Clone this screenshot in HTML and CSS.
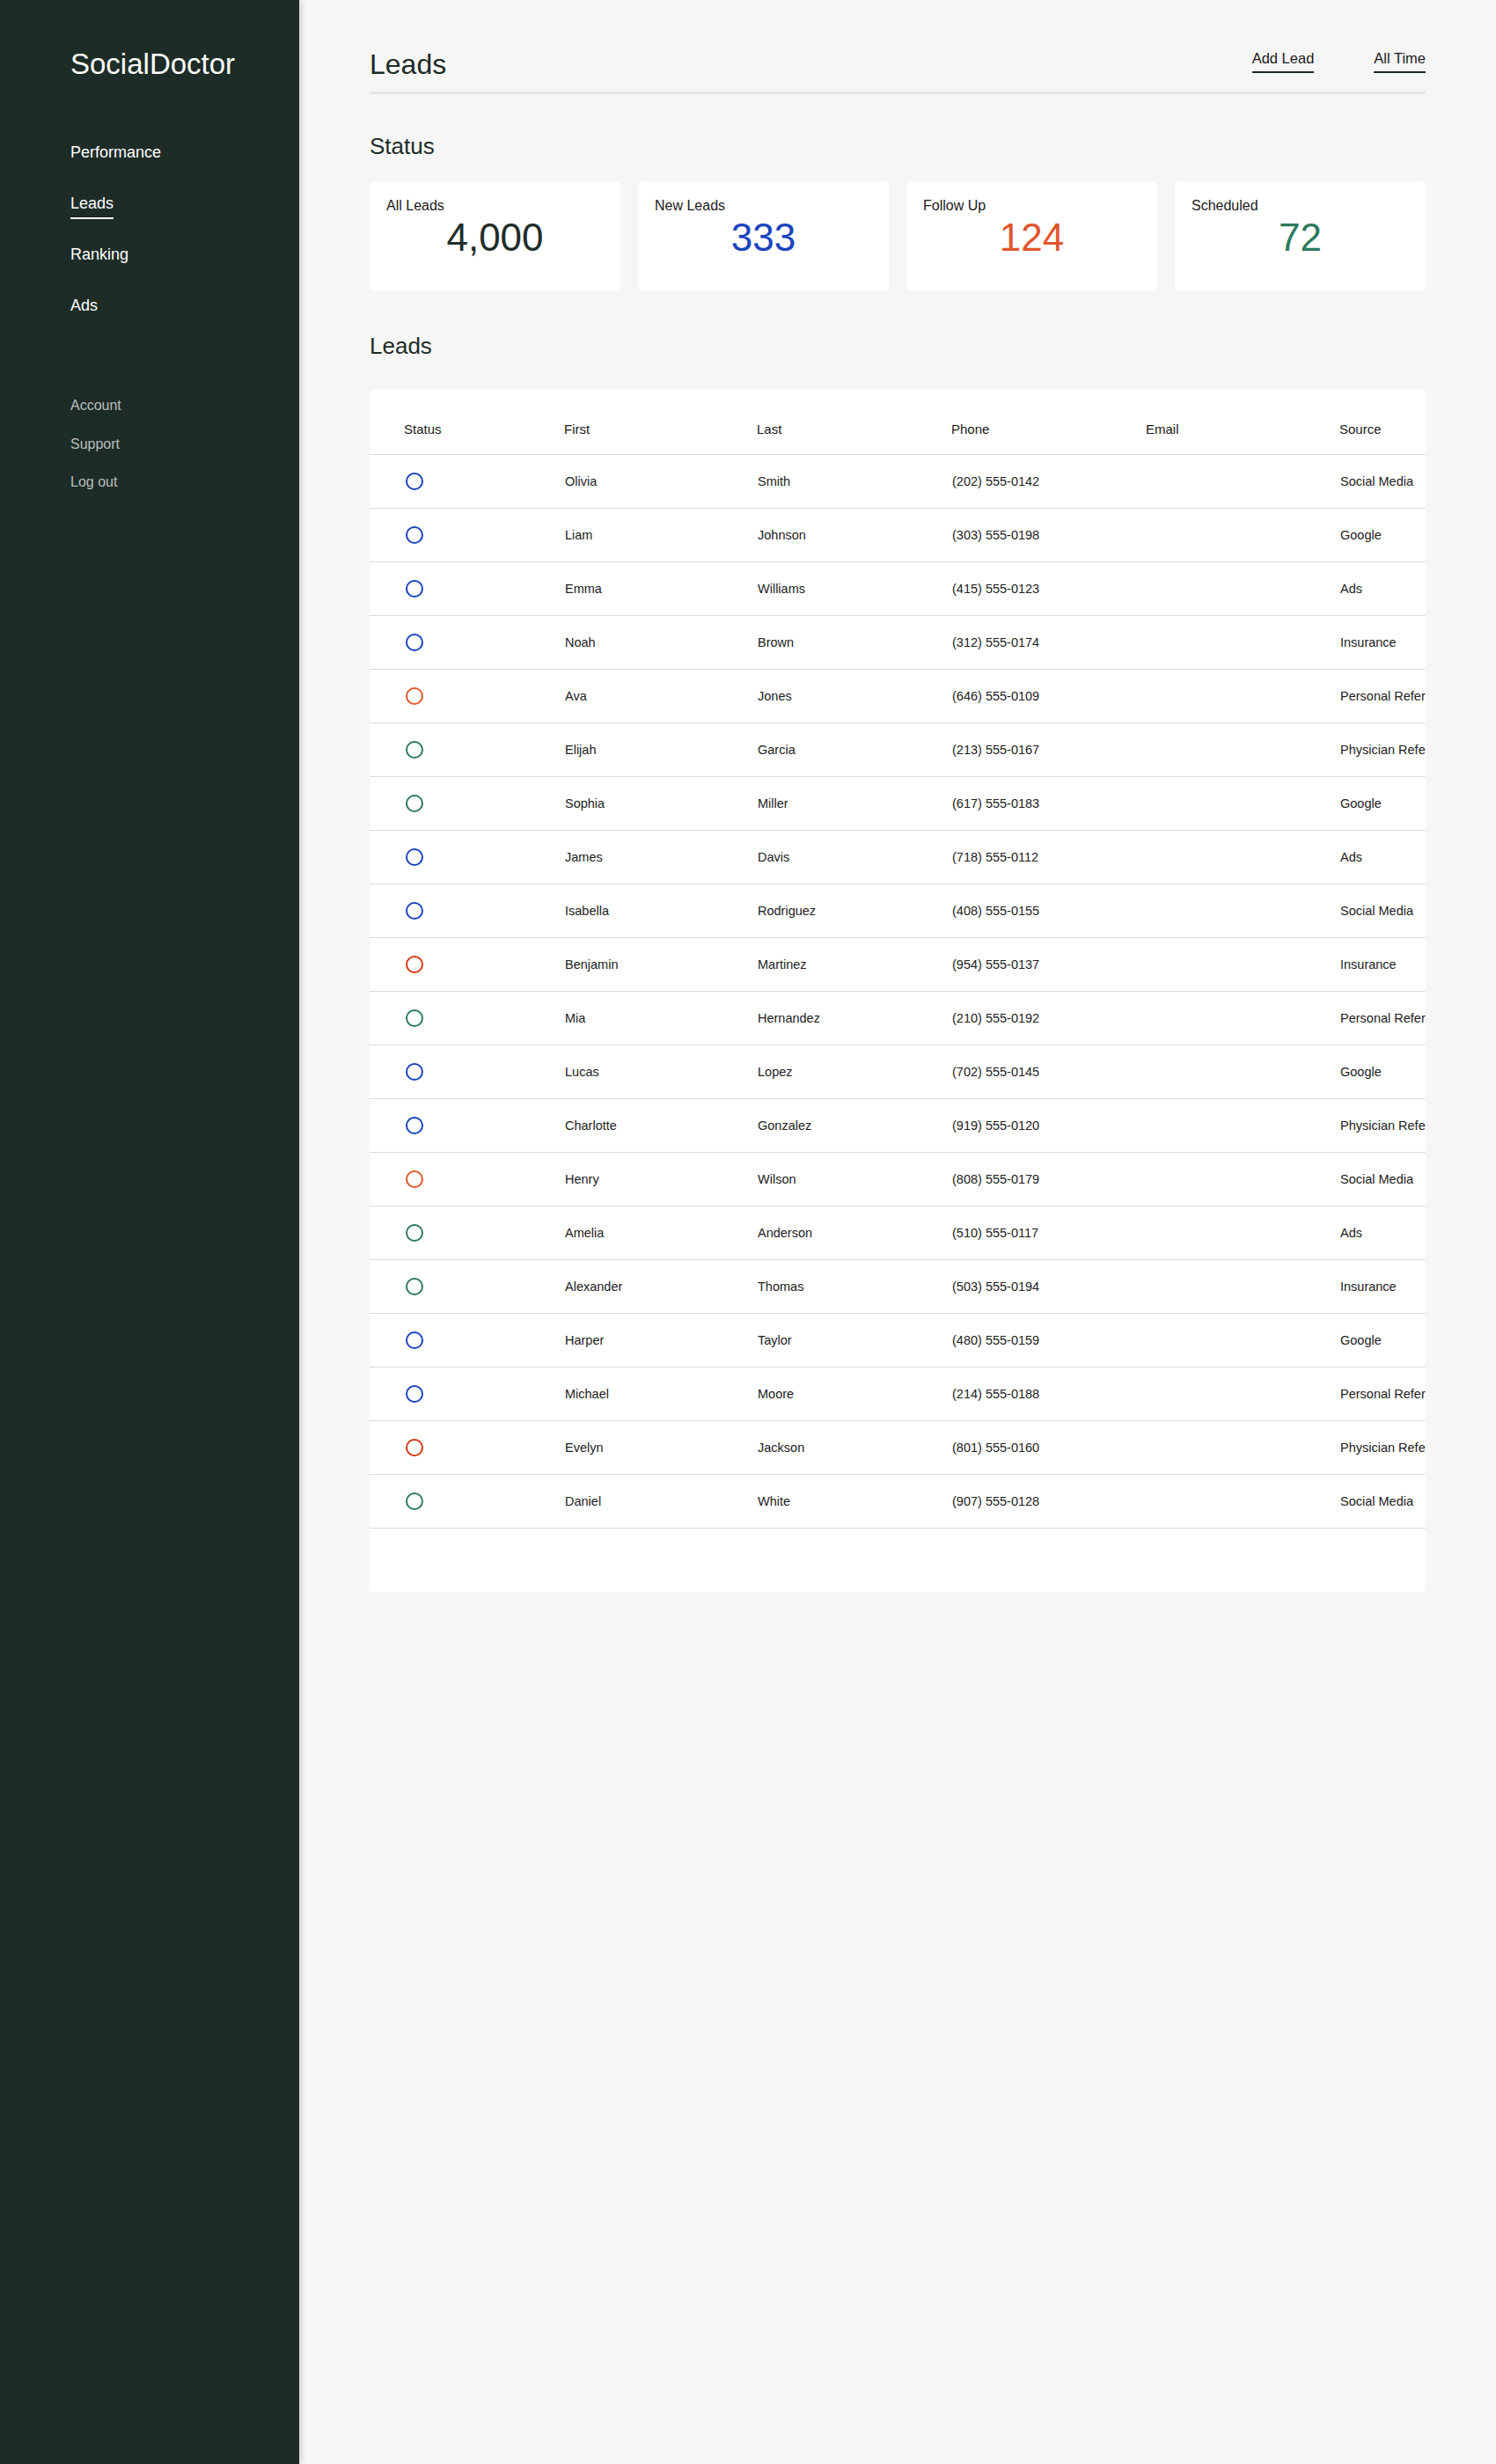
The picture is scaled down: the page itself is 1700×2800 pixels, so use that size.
FILE: index.html
```html
<!DOCTYPE html>
<html lang="en">
<head>
    <meta charset="UTF-8">
    <meta name="viewport" content="width=device-width, initial-scale=1.0">
    <title>Leads - SocialDoctor</title>
    <link rel="stylesheet" href="styles.css">
</head>
<body>
    <div class="layout">
        <!-- Sidebar -->
        <aside class="sidebar">
            <div class="logo">SocialDoctor</div>

            <nav class="nav-main">
                <a class="nav-link" href="#">Performance</a>
                <a class="nav-link active" href="#">Leads</a>
                <a class="nav-link" href="#">Ranking</a>
                <a class="nav-link" href="#">Ads</a>
            </nav>

            <nav class="nav-secondary">
                <a href="#">Account</a>
                <a href="#">Support</a>
                <a href="#">Log out</a>
            </nav>
        </aside>

        <main class="content">
            <header class="page-header">
                <h1>Leads</h1>
                <div class="header-links">
                    <a class="header-link" href="#">Add Lead</a>
                    <a class="header-link" href="#">All Time</a>
                </div>
            </header>

            <!-- Status cards -->
            <h2 class="section-title">Status</h2>
            <div class="stats">
                <div class="stat-card">
                    <div class="stat-label">All Leads</div>
                    <div class="stat-value">4,000</div>
                </div>
                <div class="stat-card">
                    <div class="stat-label">New Leads</div>
                    <div class="stat-value new">333</div>
                </div>
                <div class="stat-card">
                    <div class="stat-label">Follow Up</div>
                    <div class="stat-value follow">124</div>
                </div>
                <div class="stat-card">
                    <div class="stat-label">Scheduled</div>
                    <div class="stat-value scheduled">72</div>
                </div>
            </div>

            <!-- Leads table -->
            <h2 class="section-title leads-title">Leads</h2>
            <div class="table-card">
                <table class="leads-table">
                    <colgroup>
                        <col class="col-status">
                        <col class="col-first">
                        <col class="col-last">
                        <col class="col-phone">
                        <col class="col-email">
                        <col class="col-source">
                    </colgroup>
                    <thead>
                        <tr>
                            <th>Status</th>
                            <th>First</th>
                            <th>Last</th>
                            <th>Phone</th>
                            <th>Email</th>
                            <th>Source</th>
                        </tr>
                    </thead>
                    <tbody>
                        <tr><td><span class="dot new"></span></td><td>Olivia</td><td>Smith</td><td>(202) 555-0142</td><td></td><td>Social Media</td></tr>
                        <tr><td><span class="dot new"></span></td><td>Liam</td><td>Johnson</td><td>(303) 555-0198</td><td></td><td>Google</td></tr>
                        <tr><td><span class="dot new"></span></td><td>Emma</td><td>Williams</td><td>(415) 555-0123</td><td></td><td>Ads</td></tr>
                        <tr><td><span class="dot new"></span></td><td>Noah</td><td>Brown</td><td>(312) 555-0174</td><td></td><td>Insurance</td></tr>
                        <tr><td><span class="dot follow"></span></td><td>Ava</td><td>Jones</td><td>(646) 555-0109</td><td></td><td>Personal Referral</td></tr>
                        <tr><td><span class="dot scheduled"></span></td><td>Elijah</td><td>Garcia</td><td>(213) 555-0167</td><td></td><td>Physician Referral</td></tr>
                        <tr><td><span class="dot scheduled"></span></td><td>Sophia</td><td>Miller</td><td>(617) 555-0183</td><td></td><td>Google</td></tr>
                        <tr><td><span class="dot new"></span></td><td>James</td><td>Davis</td><td>(718) 555-0112</td><td></td><td>Ads</td></tr>
                        <tr><td><span class="dot new"></span></td><td>Isabella</td><td>Rodriguez</td><td>(408) 555-0155</td><td></td><td>Social Media</td></tr>
                        <tr><td><span class="dot urgent"></span></td><td>Benjamin</td><td>Martinez</td><td>(954) 555-0137</td><td></td><td>Insurance</td></tr>
                        <tr><td><span class="dot scheduled"></span></td><td>Mia</td><td>Hernandez</td><td>(210) 555-0192</td><td></td><td>Personal Referral</td></tr>
                        <tr><td><span class="dot new"></span></td><td>Lucas</td><td>Lopez</td><td>(702) 555-0145</td><td></td><td>Google</td></tr>
                        <tr><td><span class="dot new"></span></td><td>Charlotte</td><td>Gonzalez</td><td>(919) 555-0120</td><td></td><td>Physician Referral</td></tr>
                        <tr><td><span class="dot follow"></span></td><td>Henry</td><td>Wilson</td><td>(808) 555-0179</td><td></td><td>Social Media</td></tr>
                        <tr><td><span class="dot scheduled"></span></td><td>Amelia</td><td>Anderson</td><td>(510) 555-0117</td><td></td><td>Ads</td></tr>
                        <tr><td><span class="dot scheduled"></span></td><td>Alexander</td><td>Thomas</td><td>(503) 555-0194</td><td></td><td>Insurance</td></tr>
                        <tr><td><span class="dot new"></span></td><td>Harper</td><td>Taylor</td><td>(480) 555-0159</td><td></td><td>Google</td></tr>
                        <tr><td><span class="dot new"></span></td><td>Michael</td><td>Moore</td><td>(214) 555-0188</td><td></td><td>Personal Referral</td></tr>
                        <tr><td><span class="dot urgent"></span></td><td>Evelyn</td><td>Jackson</td><td>(801) 555-0160</td><td></td><td>Physician Referral</td></tr>
                        <tr><td><span class="dot scheduled"></span></td><td>Daniel</td><td>White</td><td>(907) 555-0128</td><td></td><td>Social Media</td></tr>
                    </tbody>
                </table>
            </div>
        </main>
    </div>
</body>
</html>
```

FILE: styles.css
```css
/* Base */
body {
    margin: 0;
    font-family: "Liberation Sans", Arial, sans-serif;
    background-color: #f6f6f6;
    color: #1d2b26;
}

a {
    color: inherit;
    text-decoration: none;
}

.layout {
    display: flex;
    min-height: 100vh;
}

/* Sidebar */
.sidebar {
    width: 340px;
    flex-shrink: 0;
    box-sizing: border-box;
    padding: 53px 0 0 80px;
    background-color: #1d2c27;
    color: #fff;
    box-shadow: 2px 0 6px rgba(0, 0, 0, 0.18);
}

.logo {
    font-size: 33px;
    line-height: 40px;
}

.nav-main {
    display: flex;
    flex-direction: column;
    align-items: flex-start;
    gap: 29px;
    margin-top: 69px;
}

.nav-link {
    font-size: 18px;
    line-height: 22px;
    padding-bottom: 5px;
    border-bottom: 2px solid transparent;
}

.nav-link.active {
    border-bottom-color: #fff;
}

.nav-secondary {
    display: flex;
    flex-direction: column;
    align-items: flex-start;
    gap: 23.5px;
    margin-top: 86px;
    color: #b9bfbc;
    font-size: 16px;
    line-height: 20px;
}

/* Main content */
.content {
    flex: 1;
    min-width: 0;
    padding: 54px 80px 80px;
}

.page-header {
    display: flex;
    justify-content: space-between;
    align-items: flex-end;
    padding-bottom: 12px;
    border-bottom: 3px solid #e6e6e6;
}

.page-header h1 {
    margin: 0;
    font-size: 32px;
    line-height: 38px;
    font-weight: 400;
}

.header-links {
    display: flex;
    gap: 68px;
    margin-bottom: 9px;
}

.header-link {
    font-size: 16.5px;
    line-height: 20px;
    padding-bottom: 5px;
    border-bottom: 2px solid #1d2c27;
    color: #1a1a1a;
}

.section-title {
    margin: 43px 0 25px;
    font-size: 26px;
    line-height: 32px;
    font-weight: 400;
}

.section-title.leads-title {
    margin: 47px 0 34px;
}

/* Status cards */
.stats {
    display: grid;
    grid-template-columns: repeat(4, 1fr);
    gap: 20px;
}

.stat-card {
    height: 123px;
    box-sizing: border-box;
    padding: 17px 19px 0;
    background-color: #fff;
    border-radius: 4px;
}

.stat-label {
    font-size: 16px;
    line-height: 20px;
    color: #1a1a1a;
}

.stat-value {
    margin-top: 1px;
    font-size: 44px;
    line-height: 50px;
    text-align: center;
    color: #1f2d28;
}

.stat-value.new { color: #1a44bd; }
.stat-value.follow { color: #e0552d; }
.stat-value.scheduled { color: #2b7a5e; }

/* Leads table */
.table-card {
    background-color: #fff;
    border-radius: 4px;
    overflow: hidden;
    padding-bottom: 72px;
}

.leads-table {
    width: 1322px;
    table-layout: fixed;
    border-collapse: collapse;
    color: #222;
}

.col-status { width: 221px; }
.col-first { width: 219px; }
.col-last { width: 221px; }
.col-phone { width: 221px; }
.col-email { width: 220px; }
.col-source { width: 220px; }

.leads-table th {
    padding: 36px 0 19px;
    font-size: 15px;
    line-height: 18px;
    font-weight: 400;
    text-align: left;
    color: #1a1a1a;
    border-bottom: 1px solid #dadada;
}

.leads-table td {
    height: 60px;
    padding: 0;
    font-size: 14.5px;
    white-space: nowrap;
    vertical-align: middle;
    border-bottom: 1px solid #dadada;
}

.leads-table th:first-child {
    padding-left: 39px;
}

.leads-table td:first-child {
    padding-left: 41px;
}

.leads-table td:nth-child(n+2) {
    padding-left: 1px;
}

.dot {
    display: block;
    width: 20px;
    height: 20px;
    box-sizing: border-box;
    border: 2px solid;
    border-radius: 50%;
}

.dot.new { border-color: #1a44bd; }
.dot.follow { border-color: #e0582c; }
.dot.urgent { border-color: #d63a12; }
.dot.scheduled { border-color: #2d7a5e; }
```
